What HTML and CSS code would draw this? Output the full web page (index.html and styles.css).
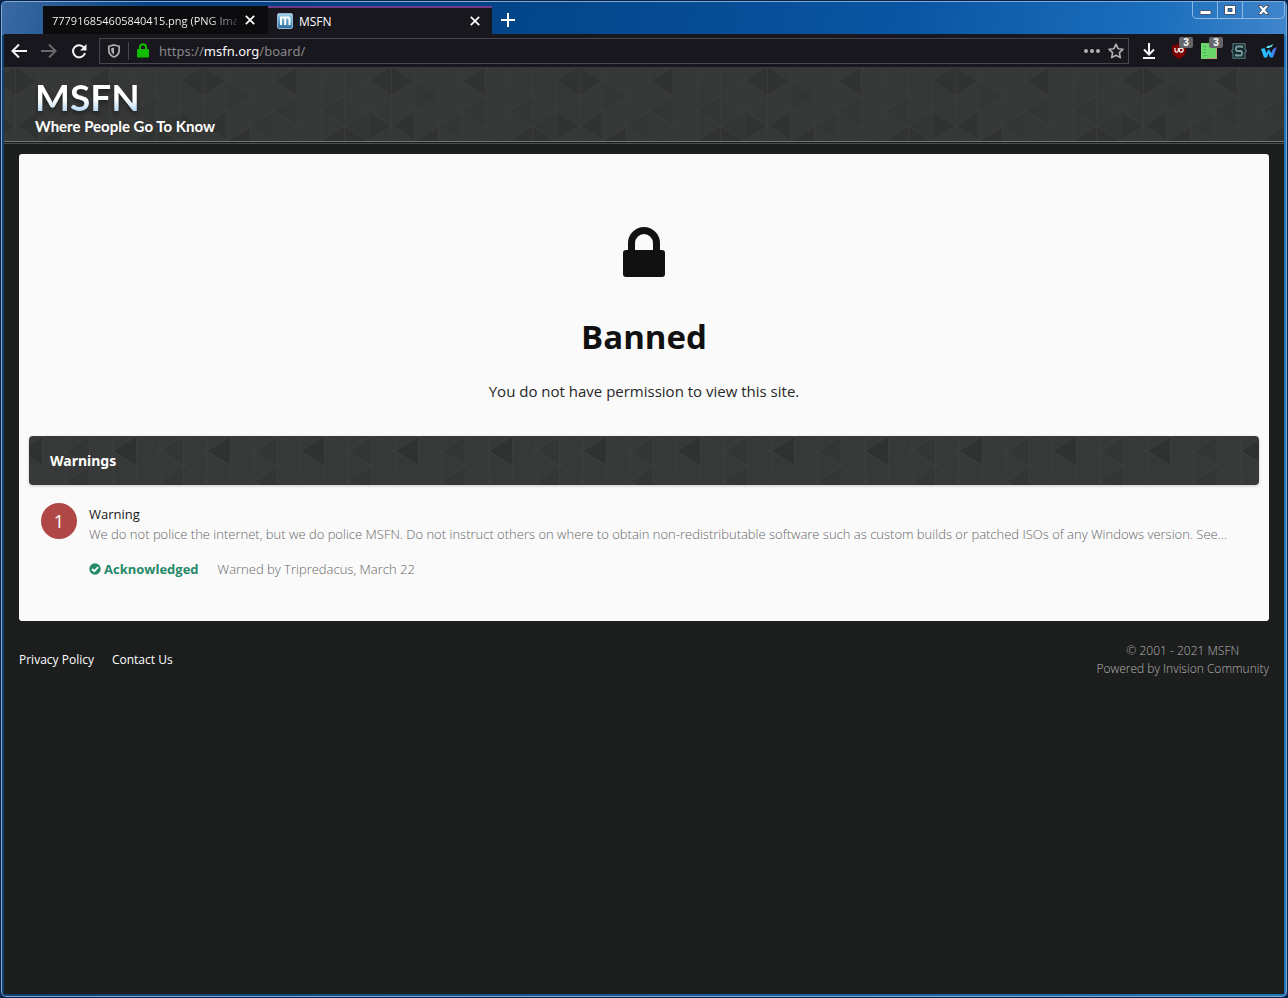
FILE: index.html
```html
<!DOCTYPE html>
<html lang="en">
<head>
<meta charset="utf-8">
<title>MSFN</title>
<link rel="stylesheet" href="styles.css">
</head>
<body>
<div class="window">
  <header class="titlebar">
    <div class="tab tab-idle">
      <span class="tab-title">777916854605840415.png (PNG Ima</span>
      <button class="close" aria-label="Close image tab"><svg width="10" height="10" viewBox="0 0 10 10"><path d="M.8.8l8.4 8.4M9.2.8L.8 9.2" stroke="#fff" stroke-width="1.7"/></svg></button>
    </div>
    <div class="tab tab-active">
      <svg class="favicon" width="16" height="16" viewBox="0 0 16 16"><defs><linearGradient id="fav" x2="0" y2="1"><stop stop-color="#a6d4ec"/><stop offset=".5" stop-color="#5ba3c9"/><stop offset="1" stop-color="#2b6d9b"/></linearGradient></defs><rect x=".5" y=".5" width="15" height="15" rx="1.5" fill="url(#fav)" stroke="#9db4d4"/><path d="M4 12V4.500H11.500L12.500 5.500V12M8.200 4.500V12" fill="none" stroke="#fff" stroke-width="2"/></svg>
      <span class="tab-title">MSFN</span>
      <button class="close" aria-label="Close MSFN tab"><svg width="10" height="10" viewBox="0 0 10 10"><path d="M.8.8l8.400 8.400M9.200.8L.8 9.200" stroke="#fff" stroke-width="1.700"/></svg></button>
    </div>
    <button class="new-tab" aria-label="New tab"><svg width="14" height="14" viewBox="0 0 14 14"><path d="M7 0v14M0 7h14" stroke="#fff" stroke-width="2"/></svg></button>
    <div class="caption">
      <button aria-label="Minimize"><svg width="13" height="12" viewBox="0 0 13 12"><rect x="1" y="6.500" width="11" height="4" rx="1" fill="#fff" stroke="#46546d"/></svg></button>
      <button aria-label="Maximize"><svg width="12" height="12" viewBox="0 0 12 12"><path d="M.5 1.500h11v9H.5zM4 4.500v3h4v-3z" fill="#fff" fill-rule="evenodd" stroke="#46546d"/></svg></button>
      <button class="wide" aria-label="Close"><svg width="13" height="12" viewBox="0 0 13 12"><path d="M1 1.500h3.500l2 2.300 2-2.300H12L8.500 6l3.500 4.500H8.500l-2-2.300-2 2.300H1L4.500 6z" fill="#fff" stroke="#46546d"/></svg></button>
    </div>
  </header>

  <nav class="toolbar" aria-label="Browser">
    <button class="tool" aria-label="Back"><svg width="16" height="16" viewBox="0 0 16 16"><path d="M16 8H1.500M8 1.500L1.500 8 8 14.500" fill="none" stroke="#f4f4f6" stroke-width="2"/></svg></button>
    <button class="tool" aria-label="Forward"><svg width="16" height="16" viewBox="0 0 16 16"><path d="M0 8h14.500M8 1.500L14.500 8 8 14.500" fill="none" stroke="#68686e" stroke-width="2"/></svg></button>
    <button class="tool" aria-label="Reload"><svg width="16" height="16" viewBox="0 0 16 16"><path d="M13.200 4.800A6.100 6.100 0 1 0 14 10" fill="none" stroke="#f4f4f6" stroke-width="2"/><path d="M15.500 1v6.500H9z" fill="#f4f4f6"/></svg></button>
    <div class="address">
      <svg width="14" height="14" viewBox="0 0 14 14"><path d="M7 1l5.200 1.300v3.900c0 3.500-2.200 5.500-5.200 6.800-3-1.300-5.200-3.300-5.200-6.800V2.300z" fill="none" stroke="#b0b0b4" stroke-width="1.700"/><path d="M7 3.500v7C5 9.300 4.200 8 4.200 6V4.200z" fill="#b0b0b4"/></svg>
      <span class="divider"></span>
      <svg width="12" height="15" viewBox="0 0 12 15"><path d="M3 7V4.200a3 3 0 0 1 6 0V7" fill="none" stroke="#12bc00" stroke-width="2"/><rect y="6" width="12" height="8.500" rx="1" fill="#12bc00"/></svg>
      <div class="url">https://<b>msfn.org</b>/board/</div>
      <button aria-label="Page actions"><svg width="16" height="16" viewBox="0 0 16 16"><g fill="#b0b0b4"><circle cx="2" cy="8" r="2"/><circle cx="8" cy="8" r="2"/><circle cx="14" cy="8" r="2"/></g></svg></button>
      <button aria-label="Bookmark this page"><svg width="16" height="16" viewBox="0 0 16 16"><path d="M8 1.200l2.100 4.500 4.900.6-3.600 3.400.9 4.900L8 12.200l-4.300 2.400.9-4.900L1 6.300l4.900-.6z" fill="none" stroke="#b0b0b4" stroke-width="1.600" stroke-linejoin="round"/></svg></button>
    </div>
    <div class="extensions">
      <button aria-label="Downloads"><svg width="16" height="16" viewBox="0 0 16 16"><path d="M8 0v11M3 6.500L8 11.500l5-5M2 15h12" fill="none" stroke="#f4f4f6" stroke-width="2"/></svg></button>
      <button aria-label="Content blocker"><svg width="16" height="16" viewBox="0 0 16 16"><path d="M8 0c2 1.500 4 2 7 2v5.500c0 4-3.500 6.500-7 8.500-3.500-2-7-4.500-7-8.500V2C4 2 6 1.500 8 0z" fill="#800000"/><path d="M4 5v2.500q0 1.700 1.600 1.700T7.300 7.500V5" fill="none" stroke="#fff" stroke-width="1.200"/><circle cx="10.200" cy="7.100" r="2" fill="none" stroke="#fff" stroke-width="1.200"/></svg><span class="badge">3</span></button>
      <button aria-label="Filter extension"><svg width="16" height="16" viewBox="0 0 16 16"><path d="M0 0h16v16H0z" fill="#6bd66b"/><path d="M2 3h3v1H2zM3 6h2v1H3zM2 9h3v1H2zM3 12h3v1H3z" fill="#4cb45c"/><path d="M6 15.500h9.500V4" fill="none" stroke="#bc9c76"/></svg><span class="badge">3</span></button>
      <button aria-label="Script extension"><svg width="16" height="16" viewBox="0 0 16 16"><path d="M2 .8h12v5.400l1.500 1.800L14 9.800v5.400H2V9.800L.5 8 2 6.200z" fill="#18272b" stroke="#568082" stroke-width="1.100"/><path d="M11 5V3.500H6L5 4.500V7l1 1h4l1 1v2.500l-1 1H5V11" fill="none" stroke="#76a0a0" stroke-width="1.800"/></svg></button>
      <button aria-label="Web extension"><svg width="16" height="16" viewBox="0 0 16 16"><defs><linearGradient id="wx"><stop stop-color="#28c8ff"/><stop offset=".6" stop-color="#25aafa"/><stop offset="1" stop-color="#6948d8"/></linearGradient></defs><path d="M0 6l3.500-1 2 5 2-4 3 4 1.500-4 4-2-4 10.500H9l-1.500-4L6 14.500H3z" fill="url(#wx)"/><path d="M5 5l2-2.500 1.500.5L12 1l-1 2.500L8 5z" fill="#5cebf4"/></svg></button>
    </div>
  </nav>

  <main class="page">
    <header class="site-header">
      <svg class="backdrop" aria-hidden="true">
        <defs>
          <pattern id="tri" width="188" height="90" x="317" y="-1" patternUnits="userSpaceOnUse">
            <rect width="188" height="90" fill="#363837"/>
            <path d="M0 45l23.500-15v30zM94 15l23.500 15L94 45zM117.500 60l23.500-15v30zM141 45l23.500-15v30zM23.500 60L47 45v30z" fill="#343635"/>
            <path d="M47 15L70.500 0 94 15 70.500 30zM141 15l23.500-15v30zM47 45v30l23.500-15zM70.500 60L94 45v30zM0 75l23.500-15L47 75 23.500 90zM94 75l23.500-15v30z" fill="#313332"/>
            <path d="M0 0v90M23.500 0v90M47 0v90M70.500 0v90M94 0v90M117.500 0v90M141 0v90M164.500 0v90M188 0v90M0 15L23.500 0 164.500 90 188 75M0 45L70.500 0 188 75M0 75L117.500 0 188 45M0 15l117.500 75L188 45M0 45l70.500 45L188 15M0 75l23.500 15L164.500 0 188 15" fill="none" stroke="#3a3c3b" stroke-width="1"/>
          </pattern>
          <pattern id="tri-title" width="94" height="60" x="131" y="0" patternUnits="userSpaceOnUse">
            <rect width="94" height="60" fill="#373938"/>
            <path d="M0 45l23.500-15v30zM0 15L23.500 0v30z" fill="#343635"/>
            <path d="M47 15L70.500 0v30z" fill="#303231"/>
            <path d="M0 0v60M23.500 0v60M47 0v60M70.500 0v60M94 0v60M0 15L23.500 0 94 45 70.500 60 0 15M0 45L70.500 0 94 15 23.500 60z" fill="none" stroke="#3c3e3d"/>
          </pattern>
        </defs>
        <rect width="100%" height="100%" fill="url(#tri)"/>
      </svg>
      <a class="brand" href="#"><span class="brand-name">MSFN</span><span class="brand-line">Where People Go To Know</span></a>
    </header>

    <section class="card">
      <div class="notice">
        <svg width="42" height="50" viewBox="0 0 42 50"><path d="M8.500 26V16a12.500 12.500 0 0 1 25 0v10" fill="none" stroke="#111" stroke-width="7"/><rect y="23" width="42" height="27" rx="3" fill="#111"/></svg>
        <h1>Banned</h1>
        <p>You do not have permission to view this site.</p>
      </div>
      <div class="section-title">
        <svg class="backdrop" aria-hidden="true"><rect width="100%" height="100%" fill="url(#tri-title)"/></svg>
        <h2>Warnings</h2>
      </div>
      <article class="warning">
        <span class="points">1</span>
        <div class="details">
          <h3>Warning</h3>
          <p class="excerpt">We do not police the internet, but we do police MSFN. Do not instruct others on where to obtain non-redistributable software such as custom builds or patched ISOs of any Windows version. See...</p>
          <div class="meta"><strong><svg width="12" height="12" viewBox="0 0 12 12"><circle cx="6" cy="6" r="5.700" fill="#26896a"/><path d="M3 6l2.200 2.200L9.200 4.200" fill="none" stroke="#fff" stroke-width="1.800"/></svg>Acknowledged</strong><span>Warned by Tripredacus, March 22</span></div>
        </div>
      </article>
    </section>

    <footer class="footer">
      <div class="links"><a href="#">Privacy Policy</a><a href="#">Contact Us</a></div>
      <div class="legal"><span>© 2001 - 2021 MSFN</span><span>Powered by Invision Community</span></div>
    </footer>
  </main>
</div>
</body>
</html>
```
FILE: styles.css
```css
* { box-sizing: border-box; }
body { margin: 0; background: #06244c; font-family: "Open Sans", "Noto Sans", sans-serif; }
button { padding: 0; border: 0; background: none; display: flex; align-items: center; justify-content: center; }
svg { display: block; flex: none; }
h1, h2, h3, p { margin: 0; }
a { color: inherit; text-decoration: none; }

.window {
  min-height: 100vh;
  display: flex;
  flex-direction: column;
  padding: 2px 3px 3px;
  background: linear-gradient(100deg, #3b6ba5 0, #06407f 12%, #034589 40%, #0a55a3 70%, #1b6fbd 90%, #4186cc) top / 100% 34px no-repeat, linear-gradient(90deg, #123e70, #2377b7);
  border: 1px solid #06244c;
  border-radius: 6px;
  box-shadow: inset 0 0 0 1px #82a8cf;
}
.titlebar { display: flex; align-items: stretch; height: 31px; padding: 3px 0 0 39px; }
.tab { display: flex; align-items: center; width: 225px; color: #fff; font-size: 12px; padding: 0 12px 0 9px; }
.tab-idle { padding-right: 13px; background: #0c0c0f; font-size: 11px; }
.tab-active { background: #18171d; border-top: 2px solid #733b87; width: 224px; }
.tab-title { flex: 1; min-width: 0; white-space: nowrap; }
.tab-idle .tab-title { background: linear-gradient(90deg, #fff 84%, #44444a); -webkit-background-clip: text; background-clip: text; color: transparent; }
.favicon { margin-right: 6px; }
.close { width: 10px; height: 20px; margin-left: 8px; }
.new-tab { width: 32px; }
.caption { display: flex; align-self: flex-start; margin: -5px -1px 0 auto; height: 18px; border: 1px solid #8fb7df; border-top: 0; border-radius: 0 0 5px 5px; }
.caption button { width: 25px; border-right: 1px solid #8fb7df; }
.caption .wide { width: 41px; border: 0; }

.toolbar { display: flex; align-items: center; height: 33px; padding-left: 7px; background: #18171d; }
.tool { width: 16px; margin-right: 14px; }
.address { flex: 1; display: flex; align-items: center; height: 26px; padding: 0 4px 0 7px; margin-left: -2px; border: 1px solid #47464c; }
.divider { width: 1px; height: 18px; margin: 0 8px 0 7px; background: #47464c; }
.url { flex: 1; padding-left: 10px; color: #88888c; font-family: "Noto Sans", sans-serif; font-size: 13px; }
.url b { color: #f8f8fa; font-weight: 400; }
.address button { margin-left: 8px; }
.extensions { display: flex; gap: 14px; padding: 0 7px 0 12px; }
.extensions button { position: relative; }
.badge { position: absolute; left: 8px; top: -6px; width: 14px; height: 11px; border-radius: 2px; background: #66666a; color: #fff; font-size: 10px; line-height: 11px; font-weight: 600; }

.page { flex: 1; background: #1c1e1d; }
.site-header { position: relative; height: 77px; padding: 8px 31px; border-bottom: 1px solid #4b4d4c; background: #1c1e1d; }
.backdrop { position: absolute; inset: 0; width: 100%; height: 100%; }
.site-header .backdrop { height: 75px; border-bottom: 1px solid #737674; }
.brand { position: relative; display: inline-flex; flex-direction: column; color: #fff; font-family: Lato, sans-serif; font-weight: 700; }
.brand-name { align-self: flex-start; font-size: 37px; line-height: 44px; background: linear-gradient(#fff 55%, #b9d8f5 82%); -webkit-background-clip: text; background-clip: text; color: transparent; filter: drop-shadow(0 3px 2px #202221); }
.brand-line { font-size: 15px; line-height: 14px; }

.card { margin: 10px 15px 0; padding: 73px 10px 42px; border-radius: 3px; background: #fafafa; }
.notice { display: flex; flex-direction: column; align-items: center; color: #111; text-align: center; }
.notice h1 { margin-top: 36px; font-size: 33px; line-height: 48px; }
.notice p { margin: 18px 0 32px; font-size: 15px; line-height: 25px; color: #272727; }
.section-title { position: relative; display: flex; align-items: center; height: 49px; padding: 0 21px; border-radius: 4px; overflow: hidden; box-shadow: 0 1px 3px #0003; }
.section-title h2 { position: relative; color: #fff; font-family: "Noto Sans", sans-serif; font-size: 14px; line-height: 20px; }
.warning { display: flex; gap: 12px; padding: 18px 12px 0; }
.points { display: grid; place-items: center; flex: none; width: 36px; height: 36px; border-radius: 50%; background: #af4746; color: #fff; font-size: 18px; }
.details { flex: 1; min-width: 0; font-size: 13px; font-weight: 300; line-height: 20px; color: #666; }
.details h3 { padding-top: 1px; color: #171717; font-size: 13px; font-weight: 400; }
.excerpt { white-space: nowrap; }
.meta { display: flex; gap: 19px; margin-top: 15px; }
.meta strong { display: flex; align-items: center; gap: 3px; color: #26896a; font-weight: 700; }
.footer { display: flex; align-items: center; justify-content: space-between; padding: 21px 15px; font-size: 12px; line-height: 18px; }
.links { display: flex; gap: 18px; color: #fff; }
.legal { display: flex; flex-direction: column; align-items: center; color: #b4b4b4; font-weight: 300; }
```
